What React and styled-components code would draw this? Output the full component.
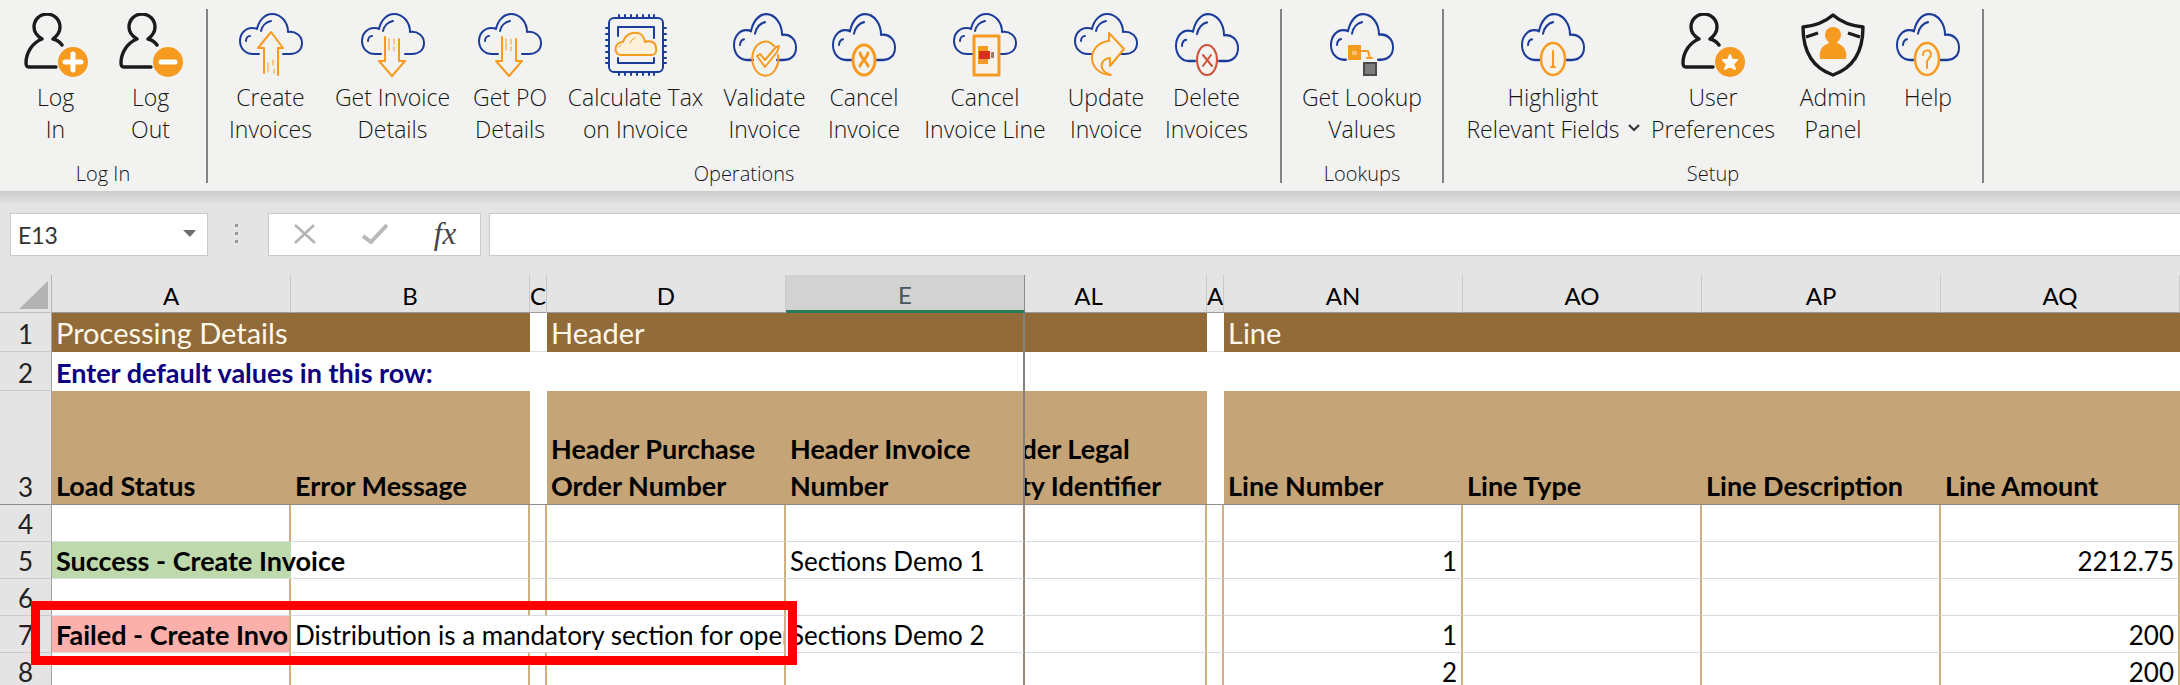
import React from "react";
import styled, { createGlobalStyle, css } from "styled-components";

const BLUE = "#1c3c9a";
const ORANGE = "#f79a20";
const INK = "#1b1b1b";
const RIBBON_FONT = `"Open Sans", "Noto Sans", sans-serif`;
const SHEET_FONT = `Lato, "Open Sans", sans-serif`;

const GlobalStyle = createGlobalStyle`
  *, *::before, *::after { box-sizing: border-box; }
  body { margin: 0; background: #fff; overflow: hidden; }
  button, input { font: inherit; color: inherit; }
`;

/* ---------- ribbon ---------- */

const Window = styled.main`
  min-height: 100vh;
  background: #e4e4e4;
  color: #000;
  font-family: ${SHEET_FONT};
`;

const Ribbon = styled.header`
  display: flex;
  padding: 9px 0 8px;
  background: #f2f2f1;
  color: #161616;
  font-family: ${RIBBON_FONT};
  font-weight: 350;
`;

const Group = styled.section`
  display: flex;
  flex-direction: column;
  flex: none;
  border-right: 2px solid #848284;
`;

const Tools = styled.div`
  display: flex;
  align-items: flex-start;
  padding: 4px ${(p) => p.$right}px 0 ${(p) => p.$left}px;
`;

const Tool = styled.button`
  display: flex;
  flex-direction: column;
  align-items: center;
  gap: 4px;
  width: ${(p) => p.$width}px;
  padding: 0;
  border: 0;
  background: none;
  font-size: 23px;
  line-height: 32px;
  white-space: nowrap;
  cursor: pointer;
`;

const ToolIcon = styled.svg`
  display: block;
  width: 64px;
  height: 64px;
  fill: none;
  stroke-linecap: round;
  stroke-linejoin: round;
`;

const Caret = styled.svg`
  width: 12px;
  height: 8px;
  margin-left: 8px;
  vertical-align: 6px;
  fill: none;
  stroke: #333;
  stroke-width: 2;
`;

const GroupName = styled.h2`
  margin: 19px 0 0;
  font-size: 20px;
  font-weight: 350;
  line-height: 19px;
  text-align: center;
`;

/* ---------- formula bar ---------- */

const FormulaBar = styled.div`
  display: flex;
  align-items: center;
  height: 84px;
  padding: 2px 0 0 10px;
  background: linear-gradient(#cbcbcb, #e4e4e4 14px);
`;

const Box = styled.div`
  display: flex;
  align-items: center;
  height: 43px;
  border: 1px solid #cbcbcb;
  background: #fff;
`;

const NameBox = styled(Box)`
  width: 198px;
  padding-right: 6px;
`;

const NameInput = styled.input`
  flex: 1;
  min-width: 0;
  height: 100%;
  padding: 2px 0 0 7px;
  border: 0;
  background: none;
  color: #333;
  font-size: 23px;
  outline: none;
`;

const BarButton = styled.button`
  display: flex;
  align-items: center;
  justify-content: center;
  width: ${(p) => p.$width}px;
  height: 100%;
  padding: 0;
  border: 0;
  background: none;
  color: #444;
  font-family: "Liberation Serif", serif;
  font-size: 31px;
  font-style: italic;
`;

const Grip = styled.svg`
  width: 4px;
  height: 24px;
  margin: 0 29px 0 27px;
  fill: #9a9a9a;
`;

const ActionBox = styled(Box)`
  width: 213px;
  margin-right: 8px;
`;

const FormulaInput = styled.input`
  flex: 1;
  min-width: 0;
  height: 43px;
  padding: 0 8px;
  border: 1px solid #cbcbcb;
  border-right: 0;
  border-radius: 0;
  background: #fff;
  font-size: 23px;
  outline: none;
`;

/* ---------- sheet ---------- */

const Sheet = styled.div`
  position: relative;
  overflow: hidden;
`;

const Grid = styled.table`
  width: 100%;
  table-layout: fixed;
  border-collapse: separate;
  border-spacing: 0;
  font-size: 26px;
  line-height: 34px;
`;

const Col = styled.col`
  width: ${(p) => (p.$width ? `${p.$width}px` : "auto")};
`;

const ColumnHead = styled.th`
  height: 38px;
  padding: 5px 0 0;
  overflow: hidden;
  border-right: 1px solid #c9c9c9;
  border-bottom: 1px solid #9b9b9b;
  background: #e4e4e4;
  font-size: 24px;
  font-weight: 400;
  line-height: 30px;
  text-align: ${(p) => (p.$narrow ? "left" : "center")};
  ${(p) =>
    p.$active &&
    css`
      padding-top: 5px;
      border-right-color: #8c8c8c;
      border-bottom: 3px solid #2b7a57;
      background: #d2d2d2;
      color: #45595b;
      line-height: 28px;
    `}
`;

const Corner = styled.td`
  padding: 0 3px 3px 0;
  border-right: 1px solid #b5b5b5;
  border-bottom: 1px solid #c0c0c0;
  text-align: right;
  vertical-align: bottom;
`;

const CornerMark = styled.svg`
  display: block;
  width: 29px;
  height: 28px;
  margin-left: auto;
  fill: #b3b3b3;
`;

const RowHead = styled.th`
  padding: 0;
  border-right: 1px solid #a3a3a3;
  border-bottom: 1px solid ${(p) => (p.$frozenEdge ? "#8f8f8f" : "#cacaca")};
  background: #e4e4e4;
  color: #222;
  font-weight: 400;
  vertical-align: bottom;
`;

const Row = styled.tr`
  height: ${(p) => p.$height}px;
`;

const cellBase = css`
  padding: 0 0 0 4px;
  text-align: left;
  vertical-align: bottom;
  white-space: nowrap;
`;

const SectionCell = styled.td`
  ${cellBase}
  background: #916b39;
  color: #fff8ea;
  font-size: 29px;
  line-height: 38px;
  border-right: ${(p) => (p.$paneEdge ? "2px solid #85827f" : "0")};
`;

const SpacerCell = styled.td`
  padding: 0;
  background: #fff;
  border-bottom: 1px solid ${(p) => (p.$frozenEdge ? "#8f8f8f" : "#dedede")};
`;

const DefaultsCell = styled.td`
  ${cellBase}
  background: #fff;
  color: #0c0080;
  font-size: 27px;
  font-weight: 700;
  line-height: 37px;
  border-right: ${(p) => (p.$paneEdge ? "2px solid #85827f" : "0")};
`;

const FieldCell = styled.td`
  ${cellBase}
  overflow: hidden;
  border-right: ${(p) => (p.$paneEdge ? "2px solid #85827f" : "0")};
  border-bottom: 1px solid #8f8a86;
  background: #c5a477;
  font-size: 27px;
  font-weight: 700;
  line-height: 37px;
  white-space: pre-line;
`;

/* Content of a column whose left part is scrolled behind the frozen pane. */
const ScrolledUnder = styled.div`
  width: 239px;
  margin-left: -56px;
  text-align: ${(p) => p.$align};
`;

const edges = {
  field: "2px solid #d0b080",
  pane: "2px solid #95877a",
  none: "0",
};

const statusFill = { success: "#bedaac", failed: "#fbb0ac" };

const DataCell = styled.td`
  ${cellBase}
  padding-right: ${(p) => (p.$number ? 4 : 0)}px;
  overflow: ${(p) => (p.$spill ? "visible" : "hidden")};
  border-right: ${(p) => edges[p.$edge || "field"]};
  border-bottom: 1px solid #d9dcdc;
  background: ${(p) => statusFill[p.$status] || "#fff"};
  font-size: ${(p) => (p.$status ? 27 : 26)}px;
  font-weight: ${(p) => (p.$status ? 700 : 400)};
  text-align: ${(p) => (p.$number ? "right" : "left")};
`;

const Callout = styled.div`
  position: absolute;
  top: 326px;
  left: 31px;
  width: 766px;
  height: 64px;
  border: 9px solid #fe0000;
  pointer-events: none;
`;

/* ---------- icons ---------- */

const Cloud = ({ depth = 41 }) => (
  <g transform={`scale(1 ${depth / 41})`} stroke={BLUE} strokeWidth="2">
    <path d="M20 41H14C6 41 1 35 1 28C1 20 7 15 13 15C15 15 17 15 18 16C20 7 26 1 33 1C42 1 49 9 49 19C57 18 63 23 63 30C63 37 58 41 51 41H44" />
    <path d="M22 18C23 13 27 9 32 8M7 28C7 25 9 23 11 23" />
  </g>
);

const Person = () => (
  <path
    d="M32 54H5C3 54 2 53 2 50C2 40 8 30 18 26C13 23 10 19 10 14A13 13 0 0 1 36 14C36 19 33 23 29 26C33 27 36 29 38 32"
    stroke={INK}
    strokeWidth="3.4"
  />
);

const Badge = ({ children }) => (
  <>
    <circle cx="49" cy="49" r="15" fill={ORANGE} />
    {children}
  </>
);

const drawings = {
  logIn: (
    <>
      <Person />
      <Badge><path d="M49 41V57M41 49H57" stroke="#fff" strokeWidth="5" /></Badge>
    </>
  ),
  logOut: (
    <>
      <Person />
      <Badge><path d="M42 49H56" stroke="#fff" strokeWidth="5" /></Badge>
    </>
  ),
  up: (
    <>
      <Cloud />
      <g stroke={ORANGE} strokeWidth="2">
        <path d="M25 60V35H19L32 19L44 35H39V62" />
        <path d="M29 50V59M34 47V52M35 56V60" strokeWidth="1" />
      </g>
    </>
  ),
  down: (
    <>
      <Cloud />
      <g stroke={ORANGE} strokeWidth="2">
        <path d="M24 24V48H18L31 63L44 48H38V26" />
        <path d="M28 26V37M33 26V31M33 34V38" strokeWidth="1" />
      </g>
    </>
  ),
  chip: (
    <>
      <g stroke={BLUE} strokeWidth="2">
        <rect x="5" y="5" width="54" height="54" rx="5" />
        <path d="M14 23V14H50V25M14 45V50H50V45" />
        <path d="M15 5V2M21 5V2M27 5V2M33 5V2M39 5V2M45 5V2M50 5V2M15 59V62M21 59V62M27 59V62M33 59V62M39 59V62M45 59V62M50 59V62" />
        <path d="M5 15H2M5 21H2M5 27H2M5 33H2M5 39H2M5 45H2M5 50H2M59 15H62M59 21H62M59 27H62M59 33H62M59 39H62M59 45H62M59 50H62" />
      </g>
      <path
        d="M17 42C9 42 10 29 19 29C21 22 27 19 33 20C37 20 40 24 41 29C46 27 52 29 52 35C53 39 51 42 47 42Z"
        fill="#fdf1dc" stroke={ORANGE} strokeWidth="2"
      />
      <path d="M26 30C27 27 29 26 31 25M15 34L17 32" stroke={ORANGE} strokeWidth="1" />
    </>
  ),
  check: (
    <>
      <Cloud depth={47} />
      <g stroke={ORANGE} strokeWidth="2">
        <path d="M41 33A13 17 0 1 0 45 42" />
        <path d="M24 43L27 41L32 47L43 34L46 33L44 39L32 54Z" />
      </g>
    </>
  ),
  cancel: (
    <>
      <Cloud depth={47} />
      <ellipse cx="32" cy="47" rx="11" ry="15" stroke={ORANGE} strokeWidth="3" />
      <path d="M28 40C29 45 35 49 36 53M36 40C35 45 29 49 28 53" stroke={ORANGE} strokeWidth="3" />
    </>
  ),
  cancelLine: (
    <>
      <Cloud />
      <rect x="21" y="23" width="25" height="39" stroke={ORANGE} strokeWidth="3" fill="#f8f3ea" />
      <rect x="25" y="33" width="10" height="18" fill={ORANGE} />
      <rect x="26" y="38" width="11" height="8" fill="#d9301a" />
      <rect x="38" y="39" width="3" height="6" fill="#a2786a" />
    </>
  ),
  update: (
    <>
      <Cloud />
      <path
        d="M35 20L50 36L36 53V45C28 46 26 52 29 57C31 60 34 61 37 62C26 62 18 54 18 45C18 36 25 29 35 28Z"
        fill="#f8f3ea" stroke={ORANGE} strokeWidth="2"
      />
    </>
  ),
  remove: (
    <>
      <Cloud depth={48} />
      <ellipse cx="32" cy="47" rx="10" ry="15" stroke="#d2523c" strokeWidth="2" />
      <path d="M28 42L37 53M36 42L28 53" stroke="#d2523c" strokeWidth="2" />
    </>
  ),
  lookup: (
    <>
      <g transform="scale(1 1.14)" stroke={BLUE} strokeWidth="2">
        <path d="M16 41H14C6 41 1 35 1 28C1 20 7 15 13 15C15 15 17 15 18 16C20 7 26 1 33 1C42 1 49 9 49 19C57 18 63 23 63 30C63 37 58 41 51 41H48" />
        <path d="M22 18C23 13 27 9 32 8M7 28C7 25 9 23 11 23" />
      </g>
      <rect x="18" y="32" width="13" height="15" fill={ORANGE} />
      <rect x="22" y="38" width="5" height="4" fill="#ffc069" />
      <path d="M32 38H38L40 45M37 45H42" stroke={ORANGE} strokeWidth="2" />
      <rect x="34" y="50" width="12" height="12" fill="#7d7d7d" stroke="#4b4b4b" strokeWidth="2" strokeLinejoin="miter" />
    </>
  ),
  info: (
    <>
      <Cloud depth={47} />
      <ellipse cx="32" cy="46" rx="12" ry="16" stroke={ORANGE} strokeWidth="2.5" fill="#f8f3ea" />
      <path d="M32 38V54M30 54H34" stroke={ORANGE} strokeWidth="2" />
    </>
  ),
  preferences: (
    <>
      <Person />
      <Badge>
        <path d="M49 42L51 47L56 47L52 51L54 56L49 53L44 56L46 51L42 47L47 47Z" fill="#fff" stroke="#fff" strokeWidth="2" />
      </Badge>
    </>
  ),
  admin: (
    <>
      <path
        d="M32 2C24 9 12 13 2 14C2 38 12 55 32 62C52 55 62 38 62 14C52 13 40 9 32 2ZM5 24L17 20M47 20L59 24"
        stroke={INK} strokeWidth="3.4" strokeLinecap="butt"
      />
      <circle cx="32" cy="22" r="8" fill={ORANGE} />
      <path d="M19 46C18 38 20 33 28 30C27 28 27 26 27 25H37C37 26 37 28 36 30C44 33 46 38 45 46Z" fill={ORANGE} />
    </>
  ),
  help: (
    <>
      <Cloud depth={47} />
      <ellipse cx="31" cy="46" rx="12" ry="16" stroke={ORANGE} strokeWidth="2.5" fill="#f8f3ea" />
      <path d="M27 42C27 36 35 36 35 41C35 45 31 46 31 49V55" stroke={ORANGE} strokeWidth="2" />
    </>
  ),
};

/* ---------- data ---------- */

const ribbonGroups = [
  {
    name: "Log In", left: 8, right: 8,
    tools: [
      { icon: "logIn", width: 95, lines: ["Log", "In"] },
      { icon: "logOut", width: 95, lines: ["Log", "Out"] },
    ],
  },
  {
    name: "Operations", left: 10, right: 21,
    tools: [
      { icon: "up", width: 105, lines: ["Create", "Invoices"] },
      { icon: "down", width: 139, lines: ["Get Invoice", "Details"] },
      { icon: "down", width: 96, lines: ["Get PO", "Details"] },
      { icon: "chip", width: 155, lines: ["Calculate Tax", "on Invoice"] },
      { icon: "check", width: 103, lines: ["Validate", "Invoice"] },
      { icon: "cancel", width: 96, lines: ["Cancel", "Invoice"] },
      { icon: "cancelLine", width: 146, lines: ["Cancel", "Invoice Line"] },
      { icon: "update", width: 96, lines: ["Update", "Invoice"] },
      { icon: "remove", width: 105, lines: ["Delete", "Invoices"] },
    ],
  },
  {
    name: "Lookups", left: 10, right: 10,
    tools: [{ icon: "lookup", width: 140, lines: ["Get Lookup", "Values"] }],
  },
  {
    name: "Setup", left: 11, right: 17,
    tools: [
      { icon: "info", width: 196, lines: ["Highlight", "Relevant Fields"], menu: true },
      { icon: "preferences", width: 124, lines: ["User", "Preferences"] },
      { icon: "admin", width: 116, lines: ["Admin", "Panel"] },
      { icon: "help", width: 74, lines: ["Help"] },
    ],
  },
];

const columnWidths = [52, 239, 239, 17, 239, 239, 182, 17, 239, 239, 239, null];

const dataRows = [
  { n: 4 },
  { n: 5, status: "success", load: "Success - Create Invoice", invoice: "Sections Demo 1", line: "1", amount: "2212.75" },
  { n: 6 },
  {
    n: 7, status: "failed", load: "Failed - Create Invoice",
    message: "Distribution is a mandatory section for operation",
    invoice: "Sections Demo 2", line: "1", amount: "200",
  },
  { n: 8, line: "2", amount: "200" },
];

const SheetRow = ({ row }) => (
  <Row $height={37}>
    <RowHead scope="row">{row.n}</RowHead>
    <DataCell $status={row.status} $spill={!row.message} $edge={row.status === "success" ? "none" : "field"}>
      {row.load}
    </DataCell>
    {row.message ? (
      <DataCell colSpan={3}>{row.message}</DataCell>
    ) : (
      <>
        <DataCell />
        <DataCell />
        <DataCell />
      </>
    )}
    <DataCell $edge="pane">{row.invoice}</DataCell>
    <DataCell />
    <DataCell />
    <DataCell $number>{row.line}</DataCell>
    <DataCell />
    <DataCell />
    <DataCell $number>{row.amount}</DataCell>
  </Row>
);

export default function App() {
  return (
    <Window>
      <GlobalStyle />
      <Ribbon>
        {ribbonGroups.map((group) => (
          <Group key={group.name} aria-label={group.name}>
            <Tools $left={group.left} $right={group.right}>
              {group.tools.map((tool) => (
                <Tool key={tool.lines.join(" ")} type="button" $width={tool.width}>
                  <ToolIcon viewBox="0 0 64 64" aria-hidden="true">{drawings[tool.icon]}</ToolIcon>
                  <span>
                    {tool.lines[0]}
                    {tool.lines[1] && <br />}
                    {tool.lines[1]}
                    {tool.menu && <Caret viewBox="0 0 12 8"><path d="M1 1L6 6L11 1" /></Caret>}
                  </span>
                </Tool>
              ))}
            </Tools>
            <GroupName>{group.name}</GroupName>
          </Group>
        ))}
      </Ribbon>

      <FormulaBar>
        <NameBox>
          <NameInput aria-label="Name box" defaultValue="E13" />
          <BarButton type="button" $width={24} aria-label="Choose a name">
            <svg width="13" height="8" viewBox="0 0 13 8"><path d="M0 0H13L7 7Z" fill="#6d6d6d" /></svg>
          </BarButton>
        </NameBox>
        <Grip viewBox="0 0 4 24" aria-hidden="true">
          <rect x="0" y="2" width="3" height="3" />
          <rect x="0" y="10" width="3" height="3" />
          <rect x="0" y="18" width="3" height="3" />
        </Grip>
        <ActionBox>
          <BarButton type="button" $width={71} aria-label="Cancel entry">
            <svg width="22" height="20" viewBox="0 0 22 20"><path d="M1 1L21 19M20 1L1 19" stroke="#b4b4b4" strokeWidth="2.6" /></svg>
          </BarButton>
          <BarButton type="button" $width={70} aria-label="Accept entry">
            <svg width="26" height="20" viewBox="0 0 26 20"><path d="M1 12L9 18L25 1" fill="none" stroke="#b9b9b9" strokeWidth="4" /></svg>
          </BarButton>
          <BarButton type="button" $width={70} aria-label="Insert function">fx</BarButton>
        </ActionBox>
        <FormulaInput aria-label="Formula" />
      </FormulaBar>

      <Sheet>
        <Grid>
          <colgroup>
            {columnWidths.map((w, i) => <Col key={i} $width={w} />)}
          </colgroup>
          <thead>
            <tr>
              <Corner>
                <CornerMark viewBox="0 0 29 28"><path d="M29 0V28H0Z" /></CornerMark>
              </Corner>
              <ColumnHead scope="col">A</ColumnHead>
              <ColumnHead scope="col">B</ColumnHead>
              <ColumnHead scope="col" $narrow>C</ColumnHead>
              <ColumnHead scope="col">D</ColumnHead>
              <ColumnHead scope="col" $active>E</ColumnHead>
              <ColumnHead scope="col"><ScrolledUnder $align="center">AL</ScrolledUnder></ColumnHead>
              <ColumnHead scope="col" $narrow>A</ColumnHead>
              <ColumnHead scope="col">AN</ColumnHead>
              <ColumnHead scope="col">AO</ColumnHead>
              <ColumnHead scope="col">AP</ColumnHead>
              <ColumnHead scope="col">AQ</ColumnHead>
            </tr>
          </thead>
          <tbody>
            <Row $height={39}>
              <RowHead scope="row">1</RowHead>
              <SectionCell colSpan={2}>Processing Details</SectionCell>
              <SpacerCell />
              <SectionCell colSpan={2} $paneEdge>Header</SectionCell>
              <SectionCell />
              <SpacerCell />
              <SectionCell colSpan={4}>Line</SectionCell>
            </Row>
            <Row $height={39}>
              <RowHead scope="row">2</RowHead>
              <DefaultsCell colSpan={5} $paneEdge>Enter default values in this row:</DefaultsCell>
              <DefaultsCell colSpan={6} />
            </Row>
            <Row $height={114}>
              <RowHead scope="row" $frozenEdge>3</RowHead>
              <FieldCell>Load Status</FieldCell>
              <FieldCell>Error Message</FieldCell>
              <SpacerCell $frozenEdge />
              <FieldCell>{"Header Purchase\nOrder Number"}</FieldCell>
              <FieldCell $paneEdge>{"Header Invoice\nNumber"}</FieldCell>
              <FieldCell>
                <ScrolledUnder $align="left">{"Header Legal\nEntity Identifier"}</ScrolledUnder>
              </FieldCell>
              <SpacerCell $frozenEdge />
              <FieldCell>Line Number</FieldCell>
              <FieldCell>Line Type</FieldCell>
              <FieldCell>Line Description</FieldCell>
              <FieldCell>Line Amount</FieldCell>
            </Row>
            {dataRows.map((row) => <SheetRow key={row.n} row={row} />)}
          </tbody>
        </Grid>
        <Callout />
      </Sheet>
    </Window>
  );
}
